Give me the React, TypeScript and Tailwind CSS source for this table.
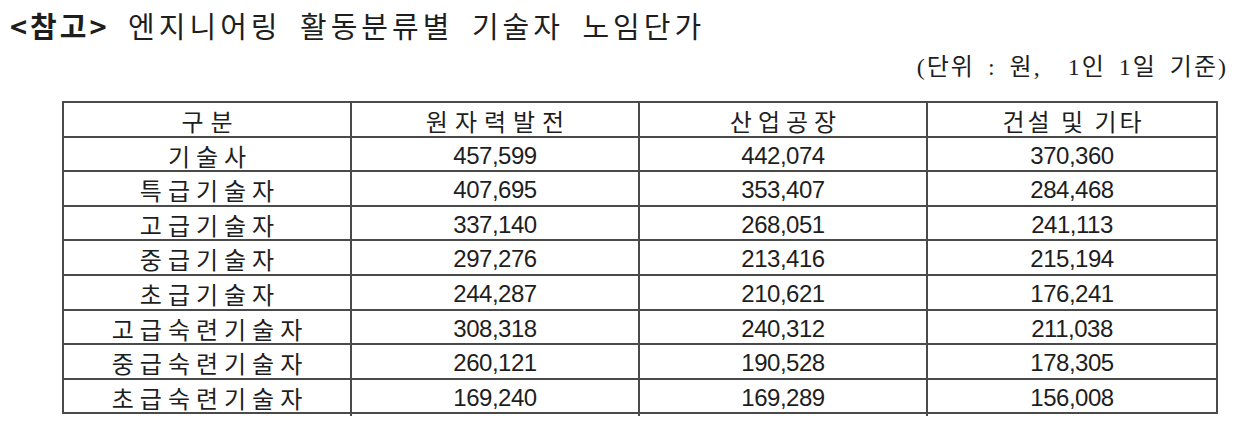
import React from "react";

const rows: [string, string, string, string][] = [
  ["기술사", "457,599", "442,074", "370,360"],
  ["특급기술자", "407,695", "353,407", "284,468"],
  ["고급기술자", "337,140", "268,051", "241,113"],
  ["중급기술자", "297,276", "213,416", "215,194"],
  ["초급기술자", "244,287", "210,621", "176,241"],
  ["고급숙련기술자", "308,318", "240,312", "211,038"],
  ["중급숙련기술자", "260,121", "190,528", "178,305"],
  ["초급숙련기술자", "169,240", "169,289", "156,008"],
];

const ko = { fontFamily: '"Noto Sans CJK KR", "Noto Sans", sans-serif' };
const num = { fontFamily: '"Liberation Sans", Arial, sans-serif' };

export default function App() {
  return (
    <div className="w-[1238px] h-[425px] bg-white text-[#1e1e1e] pt-[7px] overflow-hidden">
      <div
        className="pl-[10px] text-[29px] leading-[36px] tracking-[4px] whitespace-nowrap [word-spacing:8px]"
        style={ko}
      >
        <span className="font-bold tracking-[3px]">&lt;참고&gt;</span> 엔지니어링 활동분류별 기술자 노임단가
      </div>
      <div className="mt-[9px] flex justify-end pr-[10px]">
        <div
          className="text-[24px] leading-[30px] tracking-[2px] whitespace-nowrap [word-spacing:5px]"
          style={{ fontFamily: '"Liberation Serif", "Noto Sans CJK KR", serif' }}
        >
          (단위 : 원,&nbsp; 1인 1일 기준)
        </div>
      </div>
      <div className="mt-[19px] ml-[62px] w-[1156px] border-2 border-b-0 border-[#4a4a4a]">
        <div className="grid grid-cols-4 h-[34.6px] border-b-2 border-[#4a4a4a] text-[24px]" style={ko}>
          <div className="flex items-center justify-center border-r-2 border-[#4a4a4a] tracking-[7px] pl-[7px]">구분</div>
          <div className="flex items-center justify-center border-r-2 border-[#4a4a4a] tracking-[7px] pl-[7px]">원자력발전</div>
          <div className="flex items-center justify-center border-r-2 border-[#4a4a4a] tracking-[6px] pl-[6px]">산업공장</div>
          <div className="flex items-center justify-center tracking-[3px] pl-[3px]">건설&nbsp;및&nbsp;기타</div>
        </div>
        {rows.map((r) => (
          <div key={r[0]} className="grid grid-cols-4 h-[34.6px] border-b-2 border-[#4a4a4a]">
            <div
              className="flex items-center justify-center border-r-2 border-[#4a4a4a] text-[24px] tracking-[6px] pl-[6px]"
              style={ko}
            >
              {r[0]}
            </div>
            {r.slice(1).map((v, i) => (
              <div
                key={i}
                className={
                  "flex items-center justify-center text-[24px] tracking-[-0.5px] " +
                  (i < 2 ? "border-r-2 border-[#4a4a4a]" : "")
                }
                style={num}
              >
                {v}
              </div>
            ))}
          </div>
        ))}
      </div>
    </div>
  );
}
